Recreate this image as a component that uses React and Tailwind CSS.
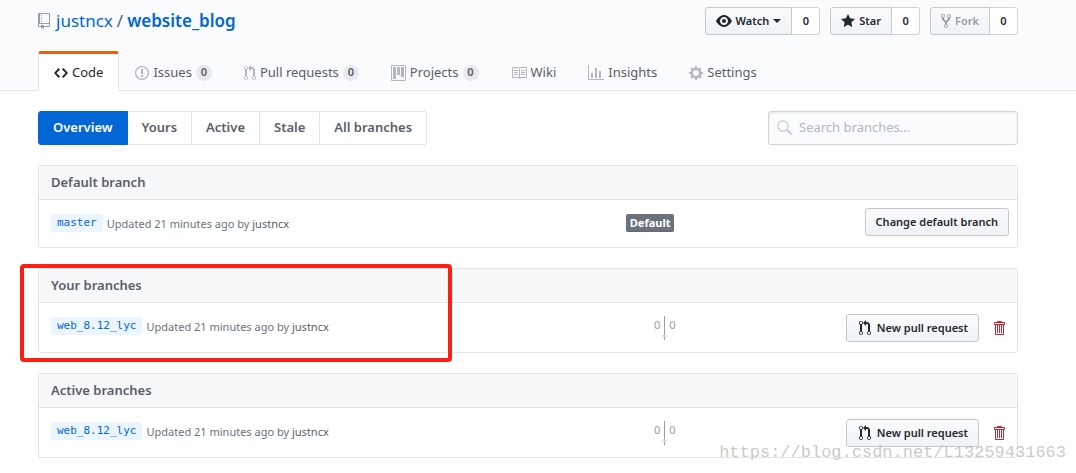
import { useState } from "react";

const ICONS = {
  repo: [12, "M4 9H3V8h1v1zm0-3H3v1h1V6zm0-2H3v1h1V4zm0-2H3v1h1V2zm8-1v12c0 .55-.45 1-1 1H6v2l-1.5-1.5L3 16v-2H1c-.55 0-1-.45-1-1V1c0-.55.45-1 1-1h10c.55 0 1 .45 1 1zm-1 10H1v2h2v-1h3v1h5v-2zm0-10H2v9h9V1z"],
  code: [14, "M9.5 3L8 4.5 11.5 8 8 11.5 9.5 13 14 8 9.5 3zm-5 0L0 8l4.5 5L6 11.5 2.5 8 6 4.5 4.5 3z"],
  issue: [14, "M7 2.3c3.14 0 5.7 2.56 5.7 5.7s-2.56 5.7-5.7 5.7A5.71 5.71 0 0 1 1.3 8c0-3.14 2.56-5.7 5.7-5.7zM7 1C3.14 1 0 4.14 0 8s3.14 7 7 7 7-3.14 7-7-3.14-7-7-7zm1 3H6v5h2V4zm0 6H6v2h2v-2z"],
  pull: [12, "M11 11.28V5c-.03-.78-.34-1.47-.94-2.06C9.46 2.35 8.78 2.03 8 2H7V0L4 3l3 3V4h1c.27.02.48.11.69.31.21.2.3.42.31.69v6.28A1.993 1.993 0 0 0 10 15a1.993 1.993 0 0 0 1-3.72zm-1 2.92c-.66 0-1.2-.55-1.2-1.2 0-.65.55-1.2 1.2-1.2.65 0 1.2.55 1.2 1.2 0 .65-.55 1.2-1.2 1.2zM4 3c0-1.11-.89-2-2-2a1.993 1.993 0 0 0-1 3.72v6.56A1.993 1.993 0 0 0 2 15a1.993 1.993 0 0 0 1-3.72V4.72c.59-.34 1-.98 1-1.72zm-.8 10c0 .66-.55 1.2-1.2 1.2-.65 0-1.2-.55-1.2-1.2 0-.65.55-1.2 1.2-1.2.65 0 1.2.55 1.2 1.2zM2 4.2C1.34 4.2.8 3.65.8 3c0-.65.55-1.2 1.2-1.2.65 0 1.2.55 1.2 1.2 0 .65-.55 1.2-1.2 1.2z"],
  project: [15, "M10 12h3V2h-3v10zm-4-2h3V2H6v8zm-4 4h3V2H2v12zm-1 1h13V1H1v14zM14 0H1a1 1 0 0 0-1 1v14a1 1 0 0 0 1 1h13a1 1 0 0 0 1-1V1a1 1 0 0 0-1-1z"],
  book: [16, "M3 5h4v1H3V5zm0 3h4V7H3v1zm0 2h4V9H3v1zm11-5h-4v1h4V5zm0 2h-4v1h4V7zm0 2h-4v1h4V9zm2-6v9c0 .55-.45 1-1 1H9.5l-1 1-1-1H2c-.55 0-1-.45-1-1V3c0-.55.45-1 1-1h5.5l1 1 1-1H15c.55 0 1 .45 1 1zm-8 .5L7.5 3H2v9h6V3.5zm7-.5H9.5l-.5.5V12h6V3z"],
  graph: [16, "M16 14v1H0V0h1v14h15zM5 13H3V8h2v5zm4 0H7V3h2v10zm4 0h-2V6h2v7z"],
  gear: [14, "M14 8.77v-1.6l-1.94-.64-.45-1.09.88-1.84-1.13-1.13-1.81.91-1.09-.45-.69-1.92h-1.6l-.63 1.94-1.11.45-1.84-.88-1.13 1.13.91 1.81-.45 1.09L0 7.23v1.59l1.94.64.45 1.09-.88 1.84 1.13 1.13 1.81-.91 1.09.45.69 1.92h1.59l.63-1.94 1.11-.45 1.84.88 1.13-1.13-.92-1.81.47-1.09L14 8.75v.02zM7 11c-1.66 0-3-1.34-3-3s1.34-3 3-3 3 1.34 3 3-1.34 3-3 3z"],
  eye: [16, "M8.06 2C3 2 0 8 0 8s3 6 8.06 6C13 14 16 8 16 8s-3-6-7.94-6zM8 12c-2.2 0-4-1.78-4-4 0-2.2 1.8-4 4-4 2.22 0 4 1.8 4 4 0 2.22-1.78 4-4 4zm2-4c0 1.11-.89 2-2 2-1.11 0-2-.89-2-2 0-1.11.89-2 2-2 1.11 0 2 .89 2 2z"],
  star: [14, "M14 6l-4.9-.64L7 1 4.9 5.36 0 6l3.6 3.26L2.67 14 7 11.67 11.33 14l-.93-4.74L14 6z"],
  fork: [10, "M8 1a1.993 1.993 0 0 0-1 3.72V6L5 8 3 6V4.72A1.993 1.993 0 0 0 2 1a1.993 1.993 0 0 0-1 3.72V6.5l3 3v1.78A1.993 1.993 0 0 0 5 15a1.993 1.993 0 0 0 1-3.72V9.5l3-3V4.72A1.993 1.993 0 0 0 8 1zM2 4.2C1.34 4.2.8 3.65.8 3c0-.65.55-1.2 1.2-1.2.65 0 1.2.55 1.2 1.2 0 .65-.55 1.2-1.2 1.2zm3 10c-.66 0-1.2-.55-1.2-1.2 0-.65.55-1.2 1.2-1.2.65 0 1.2.55 1.2 1.2 0 .65-.55 1.2-1.2 1.2zm3-10c-.66 0-1.2-.55-1.2-1.2 0-.65.55-1.2 1.2-1.2.65 0 1.2.55 1.2 1.2 0 .65-.55 1.2-1.2 1.2z"],
  trash: [12, "M11 2H9c0-.55-.45-1-1-1H5c-.55 0-1 .45-1 1H2c-.55 0-1 .45-1 1v1c0 .55.45 1 1 1v9c0 .55.45 1 1 1h7c.55 0 1-.45 1-1V5c.55 0 1-.45 1-1V3c0-.55-.45-1-1-1zm-1 12H3V5h1v8h1V5h1v8h1V5h1v8h1V5h1v9zm1-10H2V3h9v1z"],
};

const TABS = [
  { icon: "code", label: "Code" },
  { icon: "issue", label: "Issues", count: 0 },
  { icon: "pull", label: "Pull requests", count: 0 },
  { icon: "project", label: "Projects", count: 0 },
  { icon: "book", label: "Wiki" },
  { icon: "graph", label: "Insights" },
  { icon: "gear", label: "Settings" },
];

const FILTERS = ["Overview", "Yours", "Active", "Stale", "All branches"];

const BTN =
  "flex h-7 items-center border border-[#c6c9cc] bg-linear-to-b from-[#fafbfc] to-[#eff3f6] px-[10px] text-[11px] font-semibold text-[#24292e]";

function Icon({ name, className = "" }) {
  const [width, d] = ICONS[name];
  return (
    <svg
      width={width}
      height="16"
      viewBox={`0 0 ${width} 16`}
      fill="currentColor"
      fillRule="evenodd"
      className={`shrink-0 ${className}`}
      aria-hidden="true"
    >
      <path d={d} />
    </svg>
  );
}

function SocialButton({ icon, label, caret, disabled }) {
  return (
    <div className="flex">
      <button
        disabled={disabled}
        className={`${BTN} gap-1 rounded-l-[3px] disabled:text-[#959da5]`}
      >
        <Icon name={icon} />
        {label}
        {caret && (
          <span className="border-x-4 border-t-4 border-x-transparent border-t-current" />
        )}
      </button>
      <a
        href="#count"
        className="flex h-7 w-7 items-center justify-center rounded-r-[3px] border border-l-0 border-[#d1d3d5] bg-white text-[11px] font-semibold text-[#24292e]"
      >
        0
      </a>
    </div>
  );
}

function BranchBox({ title, children }) {
  return (
    <section className="relative mt-5 rounded-[3px] border border-[#e1e4e8]">
      <h2 className="flex h-[34px] items-center border-b border-[#e1e4e8] bg-[#f6f8fa] px-3 text-[13px] font-semibold text-[#586069]">
        {title}
      </h2>
      {children}
    </section>
  );
}

function BranchName({ name }) {
  return (
    <div className="flex w-3/5 items-start gap-1 pt-[14px] pl-3 text-[11px] text-[#6a737d]">
      <a
        href="#branch"
        className="h-[18px] rounded-[3px] bg-[#eaf5ff] px-[6px] font-['DejaVu_Sans_Mono',monospace] leading-[18px] text-[#0366d6]"
      >
        {name}
      </a>
      <span className="leading-5">
        Updated 21 minutes ago by{" "}
        <a href="#user" className="text-[#586069]">
          justncx
        </a>
      </span>
    </div>
  );
}

function BranchRow({ name }) {
  return (
    <div className="flex h-[49px] items-start">
      <BranchName name={name} />
      {/* behind / ahead counts */}
      <div className="flex w-[78px] justify-center gap-1 pt-[13px] text-[11px] leading-[18px] text-[#959da5]">
        <span>0</span>
        <span className="relative h-6 w-px bg-[#959da5]">
          <span className="absolute bottom-[2px] -left-[2px] h-1 w-[5px] rounded-full bg-[#d1d5da]/60" />
        </span>
        <span>0</span>
      </div>
      <div className="ml-auto flex items-center gap-[14px] pt-[11px] pr-3">
        <button className={`${BTN} gap-1 rounded-[3px]`}>
          <Icon name="pull" className="mx-[2px]" />
          New pull request
        </button>
        <button aria-label="Delete branch" className="text-[#cb2431]">
          <Icon name="trash" />
        </button>
      </div>
    </div>
  );
}

export default function App() {
  const [filter, setFilter] = useState("Overview");
  const [query, setQuery] = useState("");

  return (
    <div className="relative min-h-screen bg-white font-['Noto_Sans',sans-serif] text-[13px] text-[#24292e]">
      {/* Repo header */}
      <header className="border-b border-[#e1e4e8] bg-[#fafbfc] pt-[7px] pr-5">
        <div className="mx-auto max-w-[980px]">
          <div className="flex h-7 items-center justify-between">
            <h1 className="flex items-center text-[17px] text-[#586069]">
              <Icon name="repo" className="mr-[6px] text-[#959da5]" />
              <a href="#owner" className="text-[#0366d6]">
                justncx
              </a>
              <span className="mx-1">/</span>
              <a href="#repo" className="font-semibold text-[#0366d6]">
                website_blog
              </a>
            </h1>
            <div className="flex gap-[10px]">
              <SocialButton icon="eye" label="Watch" caret />
              <SocialButton icon="star" label="Star" />
              <SocialButton icon="fork" label="Fork" disabled />
            </div>
          </div>

          <nav className="mt-4 -mb-px flex">
            {TABS.map((tab, i) => (
              <a
                key={tab.label}
                href="#tab"
                className={`flex h-10 items-center gap-1 border-x border-t-[3px] px-[15px] ${
                  i === 0
                    ? "rounded-t-[3px] border-x-[#e1e4e8] border-t-[#e36209] bg-white"
                    : "border-transparent text-[#586069]"
                }`}
              >
                <Icon name={tab.icon} className={i === 0 ? "" : "text-[#b4b8bc]"} />
                {tab.label}
                {tab.count !== undefined && (
                  <span className="flex h-4 w-4 items-center justify-center rounded-full bg-[#e7e9eb] text-[11px] font-semibold">
                    {tab.count}
                  </span>
                )}
              </a>
            ))}
          </nav>
        </div>
      </header>

      {/* Branches */}
      <main className="pt-5 pr-5">
        <div className="mx-auto max-w-[980px]">
          <div className="flex justify-between">
            <div className="flex">
              {FILTERS.map((name) => (
                <button
                  key={name}
                  onClick={() => setFilter(name)}
                  className={`h-[34px] border border-l-0 px-[14px] font-semibold first:rounded-l-[3px] first:border-l last:rounded-r-[3px] ${
                    filter === name
                      ? "border-[#0366d6] bg-[#0366d6] text-white"
                      : "border-[#e1e4e8] text-[#586069]"
                  }`}
                >
                  {name}
                </button>
              ))}
            </div>
            <label className="flex h-[34px] w-[250px] items-center gap-[6px] rounded-[3px] border border-[#d1d5da] bg-[#fafbfc] px-2 shadow-[inset_0_1px_2px_rgba(27,31,35,0.075)]">
              <svg
                width="16"
                height="16"
                viewBox="0 0 16 16"
                fill="none"
                stroke="#c6cbd1"
                className="shrink-0"
                aria-hidden="true"
              >
                <circle cx="6" cy="6" r="5.2" strokeWidth="1.3" />
                <path d="M10 10L14.6 14.4" strokeWidth="2" />
              </svg>
              <input
                type="text"
                aria-label="Search branches"
                placeholder="Search branches..."
                value={query}
                onChange={(e) => setQuery(e.target.value)}
                className="min-w-0 flex-1 bg-transparent outline-none placeholder:text-[#b3b8bd]"
              />
            </label>
          </div>

          <BranchBox title="Default branch">
            <div className="flex h-[47px] items-start">
              <BranchName name="master" />
              <span className="mt-[14px] h-[18px] rounded-[2px] bg-[#6a737d] px-1 text-[11px] leading-[18px] font-bold text-white shadow-[inset_0_-1px_0_rgba(27,31,35,0.12)]">
                Default
              </span>
              <div className="ml-auto pt-2 pr-2">
                <button className={`${BTN} rounded-[3px]`}>
                  Change default branch
                </button>
              </div>
            </div>
          </BranchBox>

          <BranchBox title="Your branches">
            <BranchRow name="web_8.12_lyc" />
            {/* highlight frame */}
            <div className="pointer-events-none absolute -top-[5px] -bottom-[10px] -left-[19px] w-[432px] rounded-[4px] border-4 border-[#ff1f12]" />
          </BranchBox>

          <BranchBox title="Active branches">
            <BranchRow name="web_8.12_lyc" />
          </BranchBox>
        </div>
      </main>

      <span className="pointer-events-none absolute right-[10px] bottom-2 font-['Liberation_Mono',monospace] text-[17px] leading-6 text-[#b4b4ac]/70">
        https://blog.csdn.net/L13259431663
      </span>
    </div>
  );
}
